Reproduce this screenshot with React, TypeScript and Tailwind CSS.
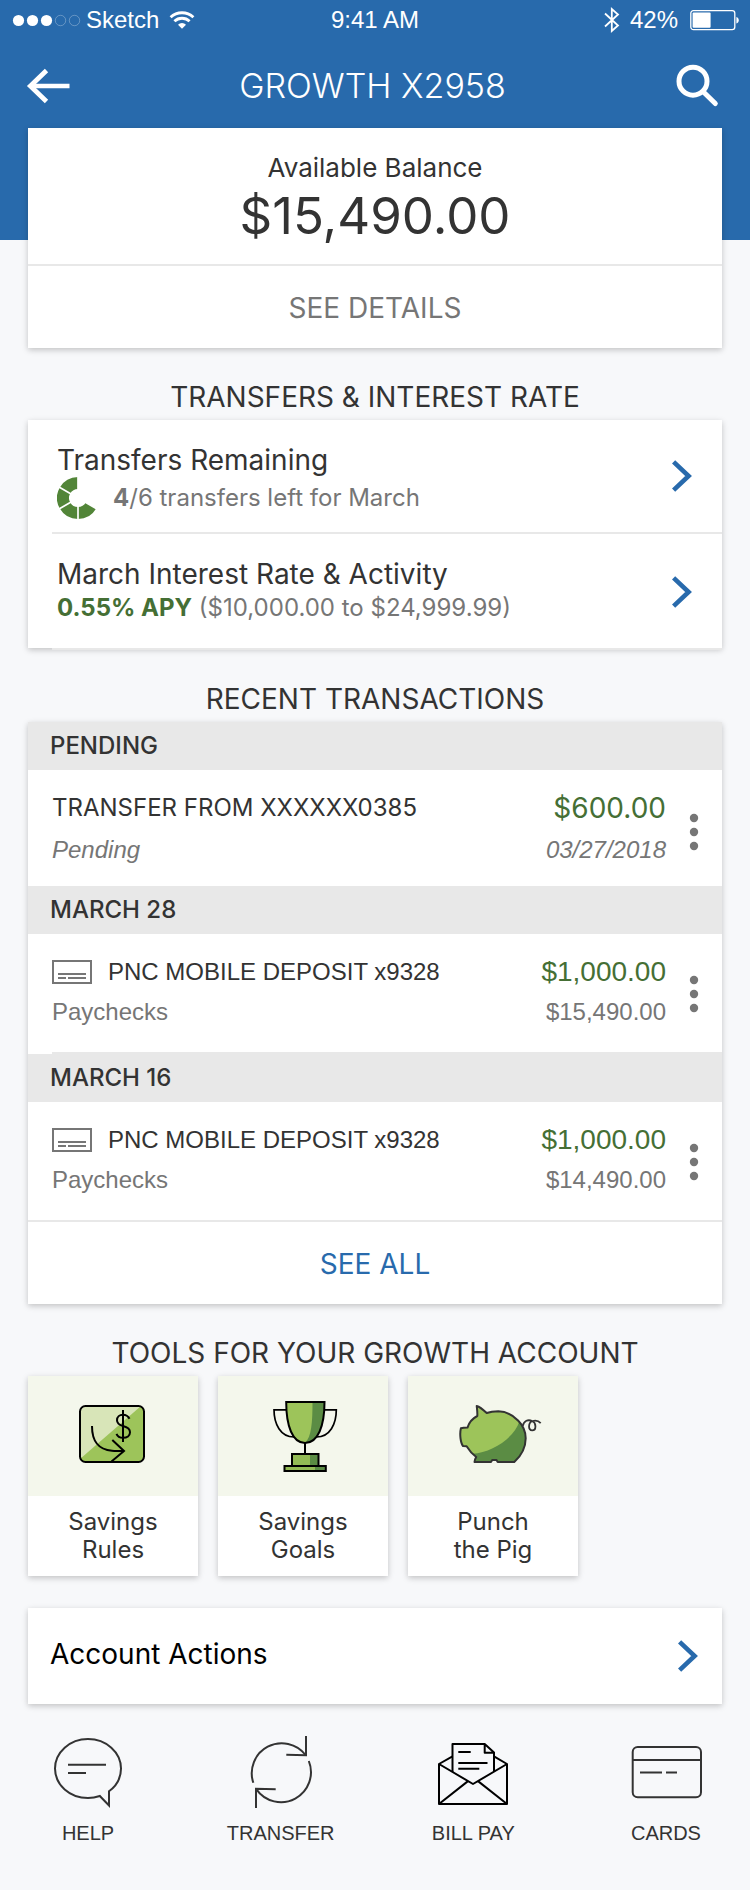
import type { ReactNode } from "react";

const cardShadow = "bg-white shadow-[0_2px_6px_rgba(0,0,0,0.22)]";

function StatusBar() {
  return (
    <div className="grid h-11 grid-cols-[1fr_auto_1fr] pb-1 font-['Liberation_Sans',sans-serif] text-2xl text-white">
      <div className="flex items-center pl-3">
        <svg width="70" height="14" viewBox="0 0 70 14" fill="none" aria-hidden="true">
          <circle cx="6.5" cy="7.5" r="5.6" fill="#fff" />
          <circle cx="20.5" cy="7.5" r="5.6" fill="#fff" />
          <circle cx="34.5" cy="7.5" r="5.6" fill="#fff" />
          <circle cx="48.5" cy="7.5" r="5.2" stroke="#fff" strokeOpacity="0.35" strokeWidth="0.8" />
          <circle cx="62.5" cy="7.5" r="5.2" stroke="#fff" strokeOpacity="0.35" strokeWidth="0.8" />
        </svg>
        <span className="ml-1">Sketch</span>
        <svg className="ml-[10px]" width="26" height="20" viewBox="0 0 26 20" fill="none" stroke="#fff" aria-hidden="true">
          <path d="M1.6 7.3 A16.5 16.5 0 0 1 24.4 7.3" strokeWidth="2.8" />
          <path d="M5.4 11.3 A11 11 0 0 1 20.6 11.3" strokeWidth="2.8" />
          <path d="M9 14.8 A5.6 5.6 0 0 1 17 14.8 L13 18.8 Z" fill="#fff" stroke="none" />
        </svg>
      </div>
      <div className="flex items-center">9:41 AM</div>
      <div className="flex items-center justify-end pr-[10px]">
        <svg width="16" height="28" viewBox="0 0 16 28" fill="none" stroke="#fff" strokeWidth="1.8" aria-hidden="true">
          <path d="M1 7.5 L14 19.5 L7.8 25 V3 L14 8.5 L1 20.5" />
        </svg>
        <span className="ml-[10px]">42%</span>
        <svg className="ml-3" width="50" height="22" viewBox="0 0 50 22" fill="none" aria-hidden="true">
          <rect x="0.8" y="1.6" width="44" height="19" rx="2.6" stroke="#fff" strokeWidth="1.3" />
          <rect x="2.6" y="3.4" width="18" height="15.4" rx="1" fill="#fff" />
          <path d="M46.4 8 C49.6 8.6 49.6 13.8 46.4 14.4 Z" fill="#fff" />
        </svg>
      </div>
    </div>
  );
}

function Chevron() {
  return (
    <svg className="shrink-0" width="20" height="32" viewBox="0 0 20 32" fill="none" stroke="#286aac" strokeWidth="4.6" aria-hidden="true">
      <path d="M1.6 1.8 L16.6 16 L1.6 30.2" />
    </svg>
  );
}

function SectionTitle({ children }: { children: ReactNode }) {
  return <h2 className="mt-7 mb-0.5 text-center text-[28px] leading-[42px] text-[#333]">{children}</h2>;
}

function TransferGauge() {
  return (
    <svg width="42" height="42" viewBox="0 0 42 42" fill="none" aria-hidden="true">
      <path d="M34 28.5 A15 15 0 1 1 21 6" stroke="#528538" strokeWidth="12" />
      <path d="M21 21 V43 M21 21 L2 32 M21 21 L2 10 M21 21 V-1 M21 21 L40 32" stroke="#fff" strokeWidth="1.7" />
    </svg>
  );
}

function CheckIcon() {
  return (
    <svg className="mr-4 shrink-0" width="40" height="24" viewBox="0 0 40 24" fill="none" stroke="#767676" strokeWidth="2" aria-hidden="true">
      <rect x="1" y="1" width="38" height="22" />
      <path d="M6 14 H34 M6 18 H14 M16 18 H34" />
    </svg>
  );
}

type Transaction = {
  title: string;
  note: string;
  amount: string;
  detail: string;
  pending?: boolean;
};

function DateHeader({ children }: { children: ReactNode }) {
  return (
    <h3 className="bg-[#e8e8e8] pl-[22px] text-2xl leading-[48px] font-medium text-[#333]">{children}</h3>
  );
}

function TransactionRow({ title, note, amount, detail, pending }: Transaction) {
  return (
    <div
      className={
        pending
          ? "flex min-h-[116px] pt-6 pb-4 pl-6"
          : "flex min-h-[118px] pt-6 pb-[22px] pl-6 font-['Liberation_Sans',sans-serif]"
      }
    >
      <div className={pending ? "flex flex-1 flex-col gap-[14px]" : "flex flex-1 flex-col gap-3"}>
        <div className="flex h-7 items-center justify-between">
          <span className="flex items-center text-2xl text-[#333]">
            {!pending && <CheckIcon />}
            {title}
          </span>
          <span className="text-[28px] leading-[30px] text-[#456f35]">{amount}</span>
        </div>
        <div
          className={
            pending
              ? "flex h-7 items-center justify-between font-['Liberation_Sans',sans-serif] text-2xl text-[#767676] italic"
              : "flex h-7 items-center justify-between text-2xl text-[#767676]"
          }
        >
          <span>{note}</span>
          <span>{detail}</span>
        </div>
      </div>
      <button type="button" aria-label="Transaction options" className="flex w-14 items-center justify-center">
        <svg width="10" height="38" viewBox="0 0 10 38" fill="#767676" aria-hidden="true">
          <circle cx="5" cy="5" r="4.2" />
          <circle cx="5" cy="19" r="4.2" />
          <circle cx="5" cy="33" r="4.2" />
        </svg>
      </button>
    </div>
  );
}

function RulesArt() {
  return (
    <svg width="170" height="120" viewBox="0 0 170 120" fill="none" stroke="#000" strokeWidth="2" aria-hidden="true">
      <rect x="52" y="30" width="64" height="56" rx="5.5" fill="#9dc45a" stroke="none" />
      <path d="M52 83 V35.5 A5.5 5.5 0 0 1 57.5 30 H113 Z" fill="#d8e5b8" stroke="none" />
      <rect x="52" y="30" width="64" height="56" rx="5.5" />
      <path d="M95 34 V66" />
      <path d="M101.5 42.8 C100 40 97.5 38.8 95 38.8 C91.5 38.8 89 41 89 44.2 C89 47.5 91.5 49 95 50 C99 51 102 52.8 102 56.2 C102 59.8 99 61.8 95 61.8 C91.8 61.8 89.6 60.6 88.5 57.8" />
      <path d="M64 50 C64 66 70.5 73.5 84 74.7 C88 75 92 75 96 75" />
      <path d="M84.3 64 L96 75 L83.5 85.5" />
    </svg>
  );
}

function TrophyArt() {
  return (
    <svg width="170" height="120" viewBox="0 0 170 120" fill="none" stroke="#000" strokeWidth="2" aria-hidden="true">
      <path d="M68.5 33.8 H56 C56 48 62.5 61 76 61 M106 33.8 H118.3 C118.3 48 112 61 98.5 61" strokeWidth="1.7" />
      <path d="M68.2 26 H106.5 C106.5 50 100 67 87 67 C74.5 67 68.2 50 68.2 26 Z" fill="#9dc45a" stroke="none" />
      <path d="M94.5 26 H106.5 C106.5 50 100 66 87 67 C93.5 61 94.5 46 94.5 26 Z" fill="#5b8c44" stroke="none" />
      <path d="M68.2 26 H106.5 C106.5 50 100 67 87 67 C74.5 67 68.2 50 68.2 26 Z" />
      <path d="M87 67 V78" />
      <rect x="74" y="78" width="26.5" height="12" fill="#93bb55" stroke="none" />
      <rect x="92" y="78" width="8.5" height="12" fill="#5b8c44" stroke="none" />
      <rect x="74" y="78" width="26.5" height="12" />
      <rect x="66.5" y="90" width="41.3" height="5" fill="#93bb55" stroke="none" />
      <rect x="97" y="90" width="10.8" height="5" fill="#5b8c44" stroke="none" />
      <rect x="66.5" y="90" width="41.3" height="5" />
    </svg>
  );
}

function PigArt() {
  const body =
    "M69.3 40 C69.6 36 69 33 68.7 30 C71.5 30.8 75.5 34 78.7 37 C82 35.8 86 35.3 90.3 35.3 C98 35.5 105 39 110.3 44.7 C115.5 50 117.7 56 117.7 62.3 C117.6 72 112.5 80.5 106.3 86 H89.7 L88.5 84 H84.2 L83 86 H66.5 C66.6 84 67.3 82.5 68.2 81 C64 78 61.5 75 58.6 70.3 L55 70 C52.5 67 51.5 58 52.9 52.2 C55 51.6 57.5 51.6 59.5 51.6 C61 46.5 64.5 42.5 69.3 40 Z";
  return (
    <svg width="170" height="120" viewBox="0 0 170 120" fill="none" stroke="#333" strokeWidth="2" strokeLinejoin="round" aria-hidden="true">
      <path d={body} fill="#9dc45a" stroke="none" />
      <path
        d="M111.3 45.7 C115.5 50 117.7 56 117.7 62.3 C117.6 72 112.5 80.5 106.3 86 H89.7 L88.5 84 H84.2 L83 86 H66.5 C66.6 84 67.3 82.5 68.2 81 L64.5 77.7 C84 76.5 106 62 111.3 45.7 Z"
        fill="#5b8c44"
        stroke="none"
      />
      <path d={body} />
      <path d="M114.7 50 C116 44.5 120 43.3 124.3 45 C128.5 47 128.5 54.4 124.2 54.4 C119.8 54.4 120 46.4 124.8 45 C127.8 44.2 130.5 44.8 132.7 47.2" strokeWidth="1.8" />
    </svg>
  );
}

function HelpIcon() {
  return (
    <svg width="72" height="72" viewBox="0 0 72 72" fill="none" stroke="#333" strokeWidth="2" aria-hidden="true">
      <path d="M57 55.3 C65 49.5 69 41.5 69 32.6 C69 16.3 54.2 3 36 3 S3 16.3 3 32.6 S17.8 62 36 62 C40 62 44 61.3 47.8 60 L57 69.5 Z" />
      <path d="M16 28.8 H54 M16 37 H34" />
    </svg>
  );
}

function TransferIcon() {
  return (
    <svg width="72" height="72" viewBox="0 0 72 72" fill="none" stroke="#333" strokeWidth="2" aria-hidden="true">
      <path d="M8.3 46.7 A30 30 0 0 1 60.6 19" />
      <path d="M63.8 25 A30 30 0 0 1 11.4 53.4" />
      <path d="M61 0 V19.3 L41.3 18.8 M11 72 V52.7 L30.7 53.2" />
    </svg>
  );
}

function BillPayIcon() {
  return (
    <svg width="72" height="72" viewBox="0 0 72 72" fill="none" stroke="#000" strokeWidth="2" strokeLinejoin="round" aria-hidden="true">
      <path d="M15.5 20.3 L2 28 V68 H70 V28 L57 20.3" />
      <path d="M2 28 L36 48 L70 28 M2 68 L31.3 44.9 M70 68 L40.7 44.9" />
      <path d="M15.5 36 V8 H47.7 L57 16.5 V36 M47.7 8 V16.7 H57" />
      <path d="M21.3 16 H33.7 M21.3 27 H50.5 M21.3 32.7 H42.3" />
    </svg>
  );
}

function CardsIcon() {
  return (
    <svg width="72" height="72" viewBox="0 0 72 72" fill="none" stroke="#333" strokeWidth="2" aria-hidden="true">
      <rect x="2.7" y="11" width="68.3" height="50.3" rx="5" />
      <path d="M3 24 H71 M10 36.4 H32 M36 36.4 H47" />
    </svg>
  );
}

const tools = [
  { name: ["Savings", "Rules"], art: <RulesArt /> },
  { name: ["Savings", "Goals"], art: <TrophyArt /> },
  { name: ["Punch", "the Pig"], art: <PigArt /> },
];

const tabs = [
  { label: "HELP", icon: <HelpIcon /> },
  { label: "TRANSFER", icon: <TransferIcon /> },
  { label: "BILL PAY", icon: <BillPayIcon /> },
  { label: "CARDS", icon: <CardsIcon /> },
];

export default function App() {
  return (
    <div className="min-h-screen bg-[#f7f8fa] font-['Inter',sans-serif] text-[#333]">
      <header className="bg-[#286aac] pb-28">
        <StatusBar />
        <div className="flex h-[84px] items-center justify-between pr-[31px] pl-[26px] text-white">
          <button type="button" aria-label="Back">
            <svg width="44" height="36" viewBox="0 0 44 36" fill="none" stroke="#fff" aria-hidden="true">
              <path d="M4 18 H43.5" strokeWidth="4.6" />
              <path d="M20.5 2.5 L4.4 18 L20.5 33.5" strokeWidth="4.8" />
            </svg>
          </button>
          <h1 className="text-[34px] leading-10 font-light">GROWTH X2958</h1>
          <button type="button" aria-label="Search">
            <svg width="44" height="44" viewBox="0 0 44 44" fill="none" stroke="#fff" strokeWidth="5" strokeLinecap="round" aria-hidden="true">
              <circle cx="18" cy="17.2" r="14" />
              <path d="M29 28.5 L40.3 39.5" />
            </svg>
          </button>
        </div>
      </header>

      <main className="-mt-28 px-7">
        <section className={cardShadow}>
          <div className="border-b-2 border-[#e8e8e8] pt-6 pb-4 text-center">
            <p className="text-[26px] leading-8">Available Balance</p>
            <p className="text-[51px] leading-[64px]">$15,490.00</p>
          </div>
          <button type="button" className="block h-[82px] w-full pt-0.5 text-[28px] text-[#767676]">
            SEE DETAILS
          </button>
        </section>

        <SectionTitle>TRANSFERS &amp; INTEREST RATE</SectionTitle>
        <section>
          <div className={cardShadow}>
            <a href="#transfers" className="flex items-center justify-between pt-6 pr-[30px] pb-3 pl-[29px]">
              <div>
                <p className="text-[28px] leading-8">Transfers Remaining</p>
                <div className="flex h-11 items-center gap-[14px] text-2xl text-[#767676]">
                  <TransferGauge />
                  <p>
                    <b className="font-bold">4</b>/6 transfers left for March
                  </p>
                </div>
              </div>
              <div className="pb-3">
                <Chevron />
              </div>
            </a>
            <div className="ml-6 h-0.5 bg-[#e8e8e8]" />
            <a href="#interest" className="flex items-center justify-between pt-6 pr-[30px] pb-[22px] pl-[29px]">
              <div>
                <p className="text-[28px] leading-8">March Interest Rate &amp; Activity</p>
                <p className="text-2xl leading-9 text-[#767676]">
                  <b className="font-bold text-[#456f35]">0.55% APY</b> ($10,000.00 to $24,999.99)
                </p>
              </div>
              <Chevron />
            </a>
          </div>
          <div className="ml-6 h-0.5 bg-[#e8e8e8]" />
        </section>

        <SectionTitle>RECENT TRANSACTIONS</SectionTitle>
        <section className={cardShadow}>
          <DateHeader>PENDING</DateHeader>
          <TransactionRow pending title="TRANSFER FROM XXXXXX0385" note="Pending" amount="$600.00" detail="03/27/2018" />
          <DateHeader>MARCH 28</DateHeader>
          <TransactionRow title="PNC MOBILE DEPOSIT x9328" note="Paychecks" amount="$1,000.00" detail="$15,490.00" />
          <div className="ml-6 h-0.5 bg-[#e8e8e8]" />
          <DateHeader>MARCH 16</DateHeader>
          <TransactionRow title="PNC MOBILE DEPOSIT x9328" note="Paychecks" amount="$1,000.00" detail="$14,490.00" />
          <button type="button" className="block h-[84px] w-full border-t-2 border-[#e8e8e8] pt-0.5 text-[28px] text-[#286aac]">
            SEE ALL
          </button>
        </section>

        <SectionTitle>TOOLS FOR YOUR GROWTH ACCOUNT</SectionTitle>
        <section className="flex gap-5">
          {tools.map(({ name, art }) => (
            <button key={name[1]} type="button" className={`w-[170px] text-2xl leading-7 ${cardShadow}`}>
              <span className="block bg-[#f4f7ec]">{art}</span>
              <span className="block py-3">
                {name[0]}
                <br />
                {name[1]}
              </span>
            </button>
          ))}
        </section>

        <a href="#actions" className={`mt-8 flex h-24 items-center justify-between pr-6 pl-[22px] text-[28px] text-black ${cardShadow}`}>
          <span className="pb-1">Account Actions</span>
          <Chevron />
        </a>
      </main>

      <nav className="flex justify-between pt-8 pr-6 pb-11 pl-7 font-['Liberation_Sans',sans-serif] text-xl leading-[26px]">
        {tabs.map(({ label, icon }) => (
          <a key={label} href={`#${label.toLowerCase().replace(" ", "-")}`} className="flex w-[120px] flex-col items-center gap-3">
            {icon}
            {label}
          </a>
        ))}
      </nav>
    </div>
  );
}
